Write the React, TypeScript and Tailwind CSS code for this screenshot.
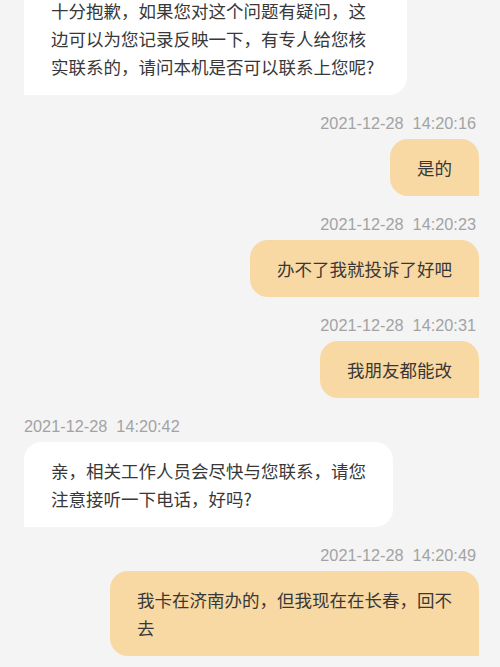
const messages = [
	{
		side: "left",
		time: "",
		text: "十分抱歉，如果您对这个问题有疑问，这边可以为您记录反映一下，有专人给您核实联系的，请问本机是否可以联系上您呢?",
		width: "w-[383px]",
	},
	{ side: "right", time: "2021-12-28  14:20:16", text: "是的", width: "" },
	{ side: "right", time: "2021-12-28  14:20:23", text: "办不了我就投诉了好吧", width: "" },
	{ side: "right", time: "2021-12-28  14:20:31", text: "我朋友都能改", width: "" },
	{
		side: "left",
		time: "2021-12-28  14:20:42",
		text: "亲，相关工作人员会尽快与您联系，请您注意接听一下电话，好吗?",
		width: "w-[369px]",
	},
	{
		side: "right",
		time: "2021-12-28  14:20:49",
		text: "我卡在济南办的，但我现在在长春，回不去",
		width: "w-[369px]",
	},
];

const App = () => {
	return (
		<div className="min-h-screen bg-[#f4f4f4] px-[22px] pb-10 overflow-hidden">
			<div className="flex flex-col -mt-[18px]">
				{messages.map((msg, index) => (
					<div
						key={index}
						className={`flex flex-col ${msg.side === "right" ? "items-end" : "items-start"} ${index === 0 ? "" : "mt-[18px]"}`}
					>
						{msg.time && (
							<p className="text-[16.3px] leading-[20px] text-[#a3a3a3] mb-[6px] whitespace-pre font-['Liberation_Sans',sans-serif] px-[2px]">
								{msg.time}
							</p>
						)}
						<div
							className={`${msg.width} py-[14.5px] px-[27px] text-[17.5px] leading-[28px] text-[#383838] font-['Noto_Sans_CJK_SC',sans-serif] rounded-[18px] ${
								msg.side === "right"
									? "bg-[#f9d9a3] rounded-br-none -mr-[1px]"
									: "bg-white rounded-bl-none ml-[2px]"
							}`}
						>
							{msg.text}
						</div>
					</div>
				))}
			</div>
		</div>
	);
};

export default App;
